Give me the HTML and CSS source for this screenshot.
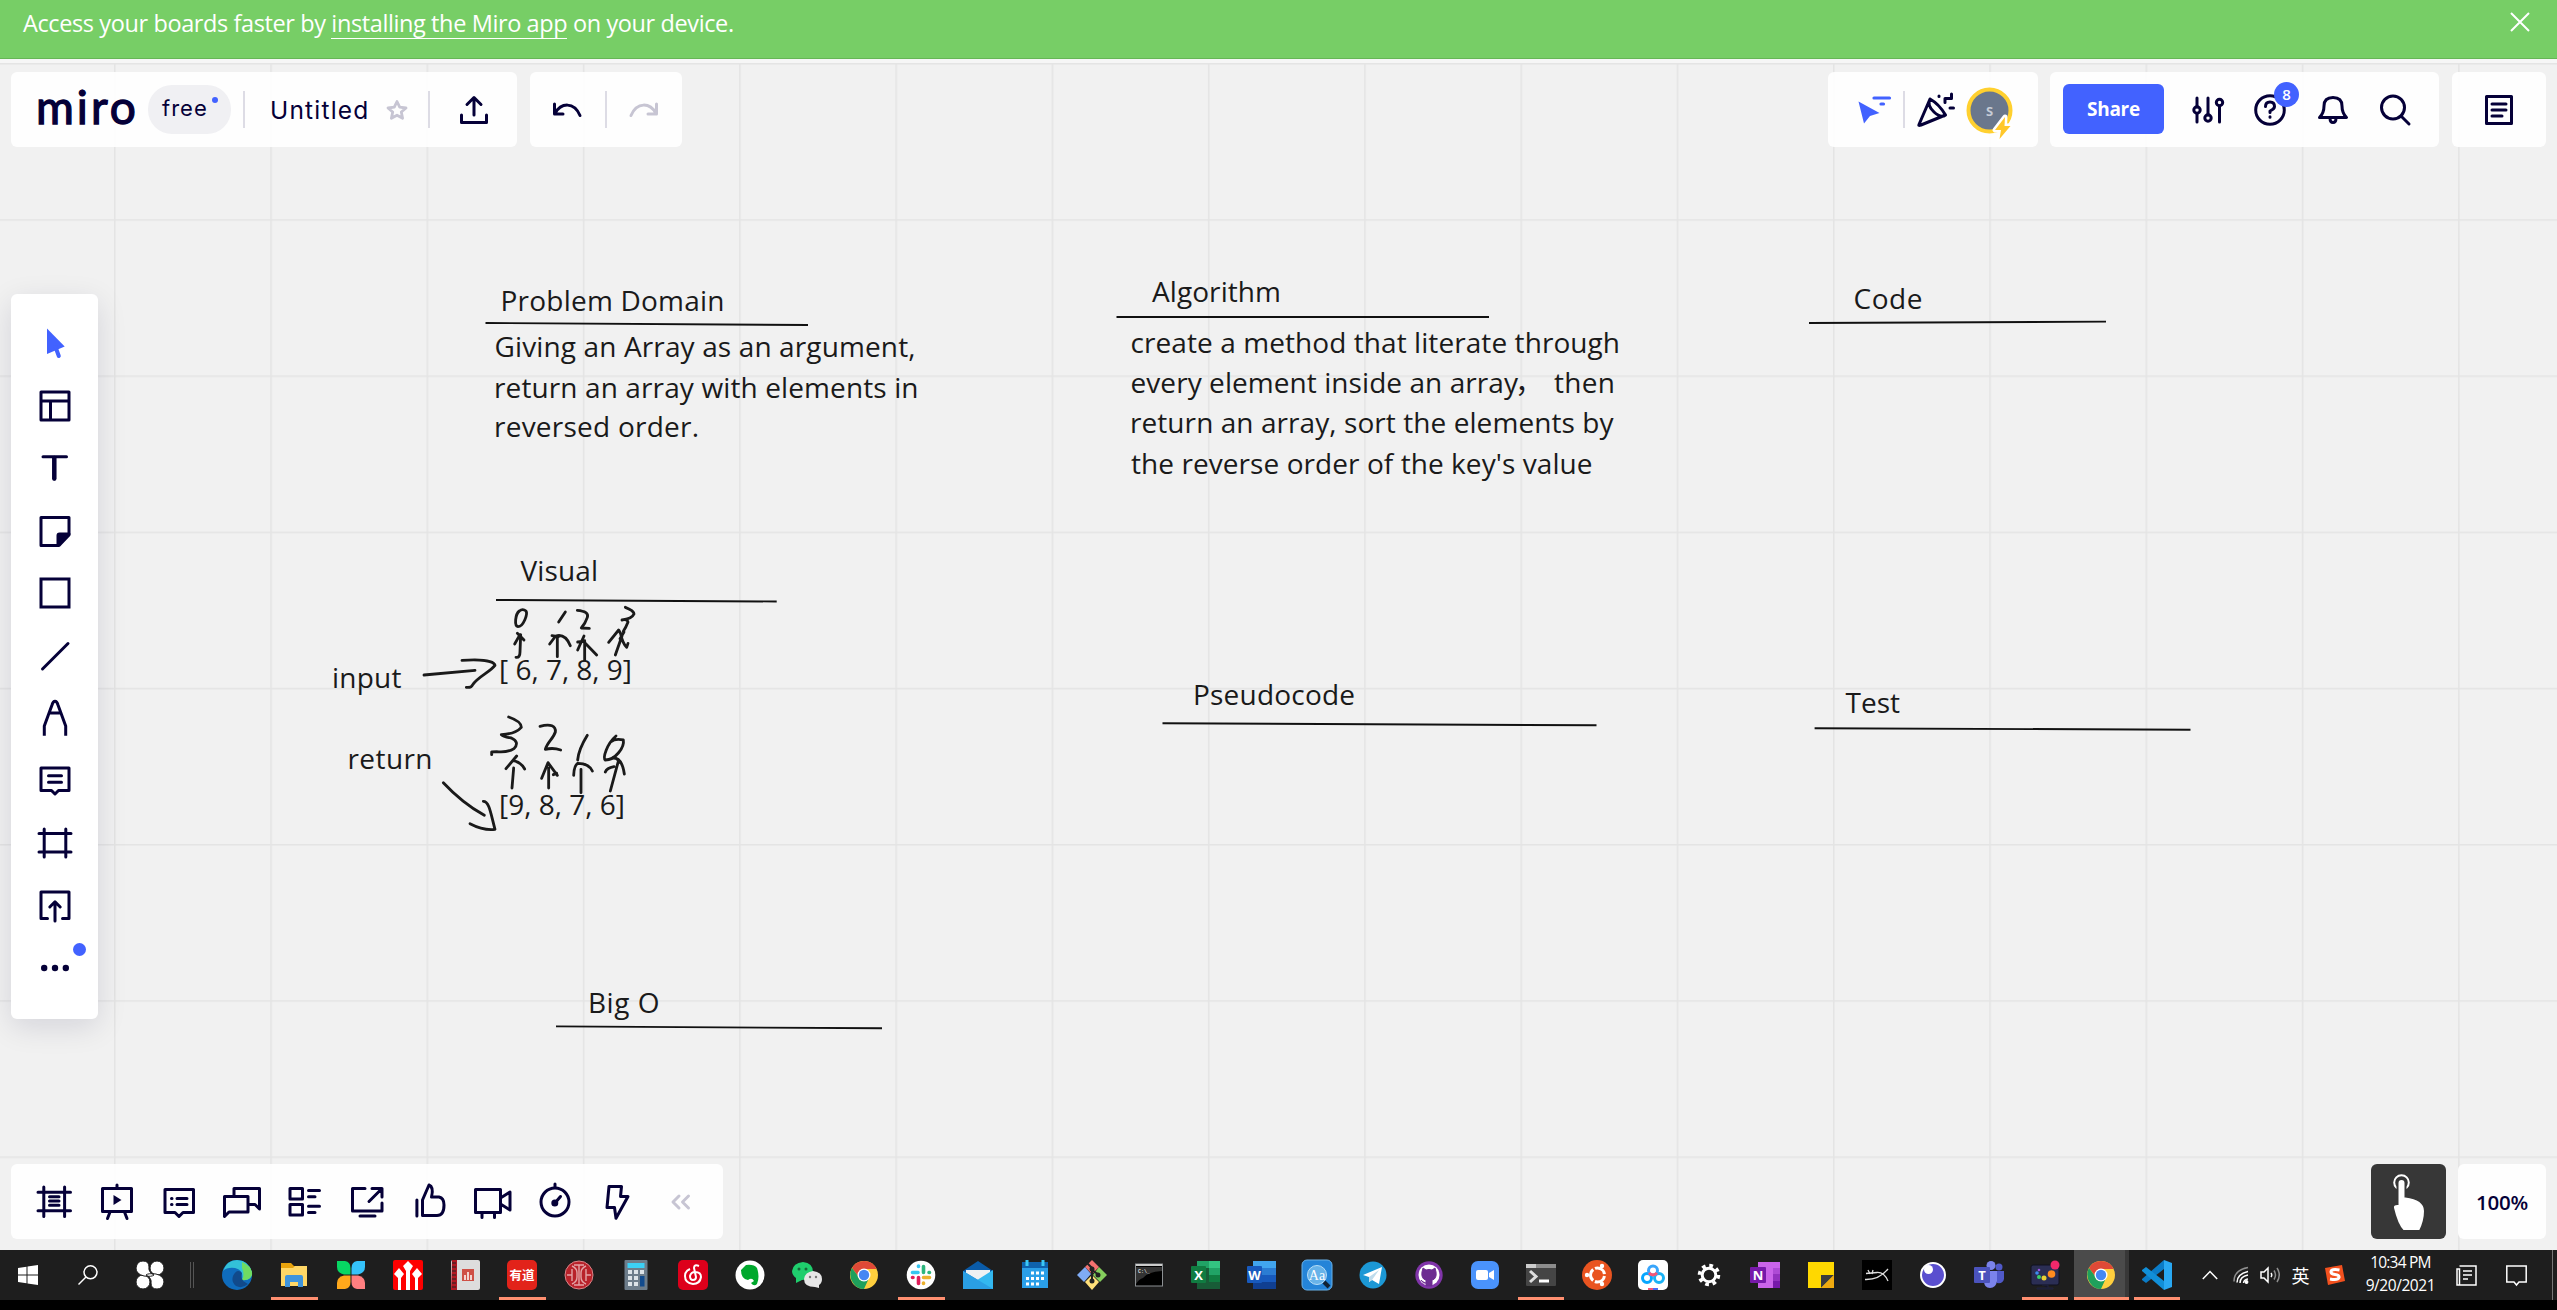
FILE: index.html
```html
<!DOCTYPE html>
<html lang="en">
<head>
<meta charset="utf-8">
<title>Untitled</title>
<link rel="stylesheet" href="styles.css">
</head>
<body>
<div class="banner">
  <p class="banner-text">Access your boards faster by <a class="banner-link">installing the Miro app</a> on your device.</p>
  <svg class="close" width="20" height="20" viewBox="0 0 20 20"><path d="M1 1L19 19M19 1L1 19"/></svg>
</div>

<main class="stage">
  <svg class="board" viewBox="0 59 2557 1191">
    <defs>
      <pattern id="grid" x="114" y="63" width="156.27" height="156.2" patternUnits="userSpaceOnUse">
        <path d="M.8 0V157M0 .8H157" stroke="#e4e4e4" stroke-width="1.6" fill="none"/>
      </pattern>
    </defs>
    <rect x="0" y="59" width="2557" height="1191" fill="url(#grid)"/>
    <rect x="0" y="59" width="2557" height="4" fill="#f6f6f6"/>
    <g class="rules">
      <path d="M485.5 323L808 325M1116.5 317H1489M1809 323L2106 321.6M496 600L776.700 601.500M1162.500 723.300L1596.500 725.300M1814.600 728.200L2190.500 729.700M556 1026.400L882 1028.300"/>
    </g>
    <g class="notes">
      <text x="500.500" y="310.500" textLength="224">Problem Domain</text>
      <text x="494.500" y="357.300" textLength="421">Giving an Array as an argument,</text>
      <text x="494" y="397.500" textLength="424.500">return an array with elements in</text>
      <text x="494" y="437.300" textLength="205">reversed order.</text>
      <text x="1152" y="301.500" textLength="129">Algorithm</text>
      <text x="1130.500" y="352.500" textLength="489.500">create a method that literate through</text>
      <text x="1130.500" y="392.500" textLength="387.500">every element inside an array</text>
      <text x="1515" y="392.500">，</text>
      <text x="1554" y="392.500" textLength="61">then</text>
      <text x="1130" y="433.300" textLength="483.500">return an array, sort the elements by</text>
      <text x="1131" y="473.500" textLength="461.500">the reverse order of the key's value</text>
      <text x="1853.500" y="308.700" textLength="69">Code</text>
      <text x="520.500" y="580.700" textLength="77.500">Visual</text>
      <text x="332" y="688" textLength="69.500">input</text>
      <text x="499" y="680.200" textLength="133">[ 6, 7, 8, 9]</text>
      <text x="347.500" y="769.300" textLength="85">return</text>
      <text x="499" y="815.200" textLength="126">[9, 8, 7, 6]</text>
      <text x="1193" y="704.500" textLength="162">Pseudocode</text>
      <text x="1845.500" y="712.700" textLength="54.500">Test</text>
      <text x="588" y="1013" textLength="71.500">Big O</text>
    </g>
    <g class="ink" transform="translate(310 540) scale(.33333)">
      <path d="M628 213C616 222 612 258 624 260C640 260 654 222 648 213C642 208 634 208 628 213"/>
      <path d="M618 352Q630 354 630 336L632 284M614 312L630 284M622 280L642 300"/>
      <path d="M766 216L746 246M742 350V288M719 312L737 288Q766 280 781 317M726 287L745 290"/>
      <path d="M802 211Q838 214 832 232Q826 250 814 264L838 265"/>
      <path d="M824 360V302M803 330L822 288M803 306L820 304L860 345"/>
      <path d="M946 202Q972 212 972 222Q966 236 936 240Q952 236 954 246Q948 262 940 274M896 307L926 270L936 288L916 345M932 282Q938 310 950 322L954 310M942 276L930 296"/>
      <path d="M342 405L495 391M456 361C510 357 552 362 555 376C540 396 504 410 488 434Q484 444 469 442"/>
      <path d="M596 531Q634 544 634 562Q616 582 574 584Q578 590 604 594Q630 606 612 626Q594 638 560 635L545 636V644"/>
      <path d="M690 559C722 550 738 558 736 576C730 596 712 606 706 628Q730 622 752 630"/>
      <path d="M832 586Q806 628 803 660M918 588C890 612 878 654 886 660C916 660 944 622 940 600Q916 594 902 606"/>
      <path d="M606 744L611 684M588 686L620 648M611 662Q634 668 644 687M716 744V684M695 715L714 668L742 706M730 704L740 700"/>
      <path d="M813 758V688M791 706Q792 676 804 670Q836 670 847 693M901 753L926 660M886 696Q890 684 912 680M908 654Q936 652 943 702M920 656L932 668"/>
      <path d="M400 728Q456 788 523 826M520 784C538 784 542 820 555 868Q520 872 480 851"/>
    </g>
  </svg>

  <div class="ui">
    <header class="top">
      <div class="panel file">
        <span class="logo">miro</span>
        <span class="plan">free</span>
        <i class="sep sep-plan"></i>
        <span class="title">Untitled</span>
        <svg class="star" width="24" height="22" viewBox="0 0 24 22"><path d="M12 2.500L14.700 8.200 21 9 16.300 13 17.600 19.300 12 16.200 6.400 19.300 7.700 13 3 9 9.300 8.200Z"/></svg>
        <i class="sep sep-star"></i>
        <svg class="icon export" width="30" height="30" viewBox="0 0 30 30"><path d="M15 20V3M8 9.500L15 2.500 22 9.500M2.500 20V27.500H27.500V20"/></svg>
      </div>
      <div class="panel history">
        <svg class="icon" width="30" height="14" viewBox="0 0 30 14"><path d="M2.500 1V11H11M3 10.500C9-.5 22-1.500 28 12.500"/></svg>
        <i class="sep"></i>
        <svg class="icon faded" width="30" height="14" viewBox="0 0 30 14"><path d="M27.500 1V11H19M27 10.500C21-.5 8-1.500 2 12.500"/></svg>
      </div>
      <div class="panel people">
        <svg width="34" height="30" viewBox="0 0 34 30"><path fill="#4262ff" d="M.5 6.500L21.500 18 12 21 6 28.500Z"/><path stroke="#4262ff" stroke-width="3.200" stroke-linecap="round" d="M16 3H31.500M23 9H25.500"/></svg>
        <i class="sep"></i>
        <svg class="icon" width="38" height="34" viewBox="0 0 38 34"><path d="M2 31.500L13 6Q22 11 28.500 22L4 32Q1 33 2 31.500ZM13 6Q9.500 12 17 19Q24 25.500 28.500 22M28 9.500V5.500H34.500V1M22 3V3.500M33 15H36.500M31 10"/></svg>
        <svg class="avatar" width="48" height="54" viewBox="0 0 48 54"><circle cx="23.500" cy="24.500" r="21" fill="#6a778c" stroke="#ffd02f" stroke-width="4"/><text x="23.500" y="30" text-anchor="middle">S</text><path d="M39 31L29 44H35L33.500 53 44.500 40H38.500Z" stroke="#fff" stroke-width="5" stroke-linejoin="round" fill="#fff"/><path d="M39 31L29 44H35L33.500 53 44.500 40H38.500Z" fill="#ffc72b"/></svg>
      </div>
      <div class="panel actions">
        <button class="share">Share</button>
        <svg class="icon sliders" width="32" height="30" viewBox="0 0 32 30"><path d="M5 3V12M5 19V27M16 3V20M27.500 11V27"/><circle cx="5" cy="15" r="3.200"/><circle cx="16" cy="23" r="3.200"/><circle cx="27.500" cy="7.500" r="3.200"/></svg>
        <span class="help">
          <svg class="icon" width="34" height="34" viewBox="0 0 34 34"><circle cx="17" cy="17" r="14.300"/><path d="M12.500 13.500Q12.500 9 17 9T21.500 13.500Q21.500 16 17 18V19.500M17 23.800V24.300"/></svg>
          <b class="badge">8</b>
        </span>
        <svg class="icon bell" width="34" height="32" viewBox="0 0 34 32"><path d="M3.500 23.500Q8 19 8 12Q8 3.500 17 3.500T26 12Q26 19 30.500 23.500ZM14 24Q14 28.500 17 28.500T20 24"/></svg>
        <svg class="icon search" width="32" height="32" viewBox="0 0 32 32"><circle cx="14" cy="13.500" r="11.500"/><path d="M22 22L30 30"/></svg>
      </div>
      <div class="panel notes-toggle">
        <svg class="icon" width="30" height="32" viewBox="0 0 30 32"><path d="M2.500 2.500H27.500V29.500H2.500ZM8 10H22M8 16H22M8 22H18"/></svg>
      </div>
    </header>

    <nav class="tools">
      <svg width="34" height="34" viewBox="0 0 34 34"><path fill="#4262ff" d="M9 2.500L26.700 20.500 9 28Z"/><path d="M17.500 21L20.800 30" stroke="#4262ff" stroke-width="4" stroke-linecap="round"/></svg>
      <svg class="icon" width="34" height="34" viewBox="0 0 34 34"><path d="M3 3H31V31H3ZM3 12H31M12.500 12V31"/></svg>
      <svg class="icon" width="34" height="34" viewBox="0 0 34 34"><path d="M5 5.700H28.500M16.300 6V28"/><path stroke-width="4.500" d="M16.300 7V27.500"/></svg>
      <svg class="icon" width="34" height="34" viewBox="0 0 34 34"><path d="M3 3.500H31V21L21 31.500H3Z"/><path fill="#050038" d="M20 31V21.500Q20 20 21.500 20H31Z"/></svg>
      <svg class="icon" width="34" height="34" viewBox="0 0 34 34"><path class="square" d="M3 3H31V31H3Z"/></svg>
      <svg class="icon" width="34" height="34" viewBox="0 0 34 34"><path d="M4.500 30L30 4.500"/></svg>
      <svg class="icon" width="34" height="34" viewBox="0 0 34 34"><path stroke-linecap="butt" d="M6.300 34.700V25L14 4Q15 .3 17 .3T20 4L27.700 25V34.700M11.500 12H22.500"/></svg>
      <svg class="icon" width="34" height="34" viewBox="0 0 34 34"><path d="M3 4H31V26.500H20.500L17 30 13.500 26.500H3ZM10.500 11.700H23.500M10.500 18.200H23.500"/></svg>
      <svg class="icon" width="34" height="34" viewBox="0 0 34 34"><path d="M6.200 3V31M27.800 3V31M1 7.500H33M1 26H33"/></svg>
      <svg class="icon" width="34" height="34" viewBox="0 0 34 34"><path d="M9.500 29.500H3V3H31V29.500H24.500M17 32V13M11.800 18L17 12.800 22.200 18"/></svg>
      <span class="more">
        <svg width="34" height="34" viewBox="0 0 34 34" fill="#050038"><circle cx="6.200" cy="17" r="3.200"/><circle cx="17" cy="17" r="3.200"/><circle cx="27.800" cy="17" r="3.200"/></svg>
        <i class="dot"></i>
      </span>
    </nav>

    <footer class="bottom">
      <div class="panel dock">
        <svg class="icon" width="36" height="36" viewBox="0 0 36 36"><path d="M7.800 3V32.500M28.600 3V32.500M2 8.200H34.500M2 26.800H34.500M13.500 12.800H23M13.500 17H23M13.500 21.200H23"/></svg>
        <svg class="icon" width="36" height="36" viewBox="0 0 36 36"><path d="M3.500 4.500H32.500V27.500H3.500ZM18 4V1M11 28L8.500 34.500M25.500 28L28 34.500"/><path fill="#050038" stroke="none" d="M14.500 11L22.500 16 14.500 21Z"/></svg>
        <svg class="icon" width="36" height="36" viewBox="0 0 36 36"><path d="M4 5.500H32.500V28.500H22L18 32.500 14 28.500H4ZM10.500 14.500H11M16 14.500H26M10.500 20.500H11M16 20.500H26"/></svg>
        <svg class="icon" width="36" height="36" viewBox="0 0 36 36"><path d="M10 12V4.500H35.500V25L31 20.500H25M.5 12.500H24V28H5L.5 32.500Z"/></svg>
        <svg class="icon" width="36" height="36" viewBox="0 0 36 36"><path d="M4 4.500H16.500V15H4ZM4 20.500H16.500V31H4ZM22.500 6.500H33.500M22.500 12.800H29M22.500 22.200H33.500M22.500 28.500H29"/></svg>
        <svg class="icon" width="36" height="36" viewBox="0 0 36 36"><path d="M16 4.500H3.500V27H33V19M11 32H26M20 17.500L32.500 5M23 4.500H33V13"/></svg>
        <svg class="icon" width="36" height="36" viewBox="0 0 36 36"><path d="M4.900 16V32M10.500 16L17 1Q22 3 19.500 13H27Q32 14 32 21Q32 31.500 25 31.500H10.500Z"/></svg>
        <svg class="icon" width="36" height="36" viewBox="0 0 36 36"><path d="M1.500 5.500H26.500V28.500H1.500ZM26.500 14L36 8V26L26.500 20M8 29V33.500M20.500 29V33.500"/></svg>
        <svg class="icon" width="36" height="36" viewBox="0 0 36 36"><circle cx="18" cy="18" r="14"/><path d="M18 3V0M18 19L23.500 12.500"/><circle cx="17.800" cy="19" r="2" fill="#050038"/></svg>
        <svg class="icon" width="36" height="36" viewBox="0 0 36 36"><path d="M10 2.500H22.500L21.500 12.500H29L17 34.200 15.500 23.500H8Z"/></svg>
        <svg class="icon faded collapse" width="20" height="16" viewBox="0 0 20 16"><path d="M8 2L2 8 8 14M17.500 2L11.500 8 17.500 14"/></svg>
      </div>
      <div class="corner">
        <div class="touch">
          <svg width="40" height="60" viewBox="0 0 40 60"><circle cx="13.500" cy="11.500" r="7.300" fill="none" stroke="#fff" stroke-width="2"/><path fill="#fff" stroke="#373737" stroke-width="2" d="M9.500 12Q9.500 8 13.500 8T17.500 12V25.500Q37 28 37 40Q37 50 32 60H15Q9 54 5 37Q4.500 33 9.500 33Z"/></svg>
        </div>
        <div class="panel zoom">100%</div>
      </div>
    </footer>
  </div>
</main>

<div class="taskbar">
  <div class="sys">
    <svg width="20" height="20" viewBox="0 0 20 20" fill="#fff"><path d="M0 3L8.500 1.700V9.500H0ZM9.500 1.500L20 0V9.500H9.500ZM0 10.500H8.500V18.300L0 17ZM9.500 10.500H20V20L9.500 18.500Z"/></svg>
    <svg width="20" height="20" viewBox="0 0 20 20" fill="none" stroke="#fff" stroke-width="1.500"><circle cx="12.500" cy="7.300" r="6.500"/><path d="M8 12L.5 19.500"/></svg>
    <svg width="30" height="30" viewBox="0 0 30 30" fill="#fff" stroke="#1e1e1e"><circle cx="8" cy="22" r="7"/><circle cx="22" cy="8" r="7"/><path d="M8 1Q14 1 14 7Q13 12 19 15Q17 17 9 16Q1 14 1 8Q2 1 8 1ZM22 29Q16 29 16 23Q17 18 11 15Q13 13 21 14Q29 16 29 22Q28 29 22 29Z"/></svg>
    <i class="grip"></i>
  </div>
  <div class="apps">
    <span class="app"><svg viewBox="0 0 30 30"><circle cx="15" cy="15" r="15" fill="#0f6cbd"/><path d="M1 11Q5 0 15 0Q28 1 30 13Q30 21 20 20Q22 10 13 8Q5 7 1 11Z" fill="#33c1d8"/><path d="M20 2Q31 7 30 15Q28 21 20 20Q23 15 20 8Z" fill="#6fdc62"/><path d="M11 16Q15 8 20 13Q17 20 26 24Q20 29 14 26Q9 22 11 16" fill="#114a8b"/></svg></span>
    <span class="app open"><svg viewBox="0 0 30 30"><path d="M2 3H12L15 6H28V26H2Z" fill="#e8a30c"/><path d="M2 8H14L16 6H28V26H2Z" fill="#ffd766"/><path d="M6 27V17Q6 15 8 15H22Q24 15 24 17V27H19V22H11V27Z" fill="#3f94dc"/></svg></span>
    <span class="app"><svg viewBox="0 0 30 30"><path d="M1 1H9Q14.500 2 14.500 8V14.500H8Q1 13 1 7Z" fill="#07d763"/><path d="M29 1H21Q15.500 2 15.500 8V14.500H22Q29 13 29 7Z" fill="#35c3fb"/><path d="M1 29H9Q14.500 28 14.500 22V15.500H8Q1 17 1 23Z" fill="#ffa81b"/><path d="M29 29H21Q15.500 28 15.500 22V15.500H22Q29 17 29 23Z" fill="#ff7f80"/></svg></span>
    <span class="app"><svg viewBox="0 0 30 30"><rect width="30" height="30" rx="2" fill="#f00"/><path d="M15 1L20 6 17 11V30H13V11L10 6ZM6 8L11 14 8 18V30H5V18L1 14ZM24 8L29 14 25 18V30H22V18L19 14Z" fill="#fff"/></svg></span>
    <span class="app"><svg viewBox="0 0 30 30"><rect x="1" y="0" width="29" height="30" rx="2" fill="#ddd"/><path d="M2 0H7V30H1Z" fill="#b01822"/><path d="M2 3H6M2 7H6M2 11H6M2 15H6M2 19H6M2 23H6M2 27H6" stroke="#222"/><rect x="12" y="9" width="12" height="12" fill="#cf5046"/><path d="M15 20V15M18 20V12M21 20V15" stroke="#fff" stroke-width="1.500"/></svg></span>
    <span class="app open"><svg viewBox="0 0 30 30"><rect width="30" height="30" rx="5" fill="#e2231a"/><text x="15" y="20" text-anchor="middle" class="glyph cjk">有道</text></svg></span>
    <span class="app"><svg viewBox="0 0 30 30"><circle cx="15" cy="15" r="14" fill="#b8222a" stroke="#d9868a"/><path d="M8 6Q13 8 13 13V17Q13 22 8 24M22 6Q17 8 17 13V17Q17 22 22 24M10 5H20M10 25H20M15 5V25M3 15H8M22 15H27M8 9V21M22 9V21" stroke="#e3a3a6" stroke-width="1.400" fill="none"/></svg></span>
    <span class="app"><svg viewBox="0 0 30 30"><rect x="3.500" width="23" height="30" rx="1" fill="#6d7d8b"/><rect x="6.500" y="3" width="17" height="5" fill="#3cd0f5"/><path d="M7 10H11V14H7ZM13 10H17V14H13ZM19 10H23V14H19ZM7 16H11V20H7ZM13 16H17V20H13ZM7 22H11V26H7ZM13 22H17V26H13Z" fill="#dce3e8"/><rect x="19" y="16" width="4.500" height="10.500" fill="#114b8e"/></svg></span>
    <span class="app"><svg viewBox="0 0 30 30"><rect width="30" height="30" rx="5" fill="#dd001b"/><path d="M21 6Q16 4 16 8L18 17Q18 20 15 20Q12 20 12 16Q13 12 17 12Q23 12 23 17Q22 24 15 24Q7 23 7 16Q7 11 12 9" fill="none" stroke="#fff" stroke-width="2"/></svg></span>
    <span class="app"><svg viewBox="0 0 30 30"><circle cx="15" cy="15" r="14.500" fill="#fff"/><path d="M6 10L11 5Q19 4 22 8Q25 17 22 24Q19 27 16 23L19 21Q17 17 13 20Q6 19 6 10Z" fill="#00a82d"/></svg></span>
    <span class="app"><svg viewBox="0 0 30 30"><path d="M11 2Q21 3 21 12Q20 20 10 20L4 23V18Q0 15 0 11Q1 3 11 2" fill="#1fce6d"/><circle cx="7" cy="9" r="1.500" fill="#17683a"/><circle cx="14" cy="9" r="1.500" fill="#17683a"/><path d="M21 11Q30 12 30 19Q30 23 27 25V28L23 27Q12 27 12 19Q13 12 21 11" fill="#e6e6e6"/><circle cx="18" cy="17" r="1.200" fill="#777"/><circle cx="24" cy="17" r="1.200" fill="#777"/></svg></span>
    <span class="app"><svg viewBox="0 0 30 30"><use href="#chrome"/></svg></span>
    <span class="app open"><svg viewBox="0 0 30 30"><circle cx="15" cy="15" r="14.300" fill="#fff"/><g stroke-width="3.600" stroke-linecap="round"><path d="M6.500 12.500H12M12.500 6V6.500" stroke="#36c5f0"/><path d="M17.500 6.500V12.500M23 12.500H23.500" stroke="#2eb67d"/><path d="M17.500 17.500H23.500M17.500 23V23.500" stroke="#ecb22e"/><path d="M12.500 17.500V23.500M6.500 17.500H7" stroke="#e01e5a"/></g></svg></span>
    <span class="app"><svg viewBox="0 0 30 30"><path d="M0 11L15 1 30 11V20H0Z" fill="#0a5ba8"/><path d="M3 10H27V20H3Z" fill="#eef1f3"/><path d="M0 11L15 20 0 29Z" fill="#1a8ad8"/><path d="M30 10L0 29H30Z" fill="#33b8f0"/><path d="M0 11L30 29H0Z" fill="#2a9fe4"/></svg></span>
    <span class="app"><svg viewBox="0 0 30 30"><path d="M2 2H28V9H2Z" fill="#0f62ad"/><path d="M2 8H28V28H2Z" fill="#2a9fe8"/><path d="M7 0V6M23 0V6" stroke="#3bc8f5" stroke-width="3"/><path d="M11 13H25M6 18.500H25M6 24H20" stroke="#fff" stroke-width="3" stroke-dasharray="3 2"/></svg></span>
    <span class="app"><svg viewBox="0 0 30 30"><path d="M15 0L22 7 15 14 8 7Z" fill="#f4716f"/><path d="M8 7L14 14 7 22 0 15Z" fill="#7fabf5"/><path d="M22 7L30 15 23 22 16 15Z" fill="#85cf5d"/><path d="M15 15L22 22 15 30 8 22Z" fill="#ffe07a"/><path d="M10 3L15 8V22M15 10L22 15" stroke="#222" stroke-width="2" fill="none"/><g fill="#222"><circle cx="15" cy="9" r="2.500"/><circle cx="15" cy="21" r="2.500"/><circle cx="21" cy="15" r="2.500"/></g></svg></span>
    <span class="app near"><svg viewBox="0 0 30 30"><rect x="1.500" y="4" width="27" height="22" fill="#000" stroke="#8c9093"/><path d="M2 5H28" stroke="#ccc" stroke-width="2"/><path d="M2 7H28V11Q13 12 9 18Q5 19 2 24Z" fill="#333"/><text x="4" y="13" class="tiny">C:\_</text></svg></span>
    <span class="app near"><svg viewBox="0 0 30 30"><path d="M7 1H30V29H7Z" fill="#185c37"/><path d="M7 1H19V8H7Z" fill="#21a366"/><path d="M19 1H30V8H19Z" fill="#33c481"/><path d="M19 8H30V15H19Z" fill="#21a366"/><path d="M19 15H30V22H19Z" fill="#107c41"/><rect x="1" y="6" width="15" height="17" rx="1" fill="#107c41"/><text x="8.500" y="19.500" text-anchor="middle" class="glyph">X</text></svg></span>
    <span class="app near"><svg viewBox="0 0 30 30"><path d="M7 1H30V8H7Z" fill="#41a5ee"/><path d="M7 8H30V15H7Z" fill="#2b7cd3"/><path d="M7 15H30V22H7Z" fill="#185abd"/><path d="M7 22H30V29H7Z" fill="#103f91"/><rect x="1" y="6" width="15" height="17" rx="1" fill="#185abd"/><text x="8.500" y="19.500" text-anchor="middle" class="glyph">W</text></svg></span>
    <span class="app near"><svg viewBox="0 0 30 30"><rect width="30" height="30" rx="5" fill="#2484d8" stroke="#69b1e8"/><circle cx="15" cy="15" r="9.500" fill="#68b3e9" stroke="#b6ddf6"/><path d="M22 22L27 27" stroke="#123" stroke-width="4"/><text x="15" y="20" text-anchor="middle" class="glyph serif">Aa</text></svg></span>
    <span class="app near"><svg viewBox="0 0 30 30"><circle cx="15" cy="15" r="13.500" fill="#1c98d5"/><path d="M5 15L24 7 21 24 14 20 11 22V17Z" fill="#fff"/><path d="M11 17L21 10 14 20 11 22" fill="#bfdcec"/></svg></span>
    <span class="app near"><svg viewBox="0 0 30 30"><circle cx="15" cy="15" r="13.700" fill="#8034a9"/><circle cx="15" cy="15" r="10.500" fill="#fff"/><path d="M9 8L12 10Q15 9 18 10L21 8 22 12Q23 19 18 20V26H12V20Q7 19 8 12ZM12 23Q9 24 7 20" fill="#6d2d91" stroke="#6d2d91"/></svg></span>
    <span class="app near"><svg viewBox="0 0 30 30"><rect x="1" y="1" width="28" height="28" rx="7" fill="#4a93fb"/><rect x="6" y="10" width="12" height="10" rx="2" fill="#fff"/><path d="M19 13L24 10V20L19 17Z" fill="#fff"/></svg></span>
    <span class="app near open"><svg viewBox="0 0 30 30"><rect y="4" width="30" height="22" rx="1" fill="#454545"/><path d="M0 4H30V8H0Z" fill="#8d8d8d"/><path d="M0 4H10V8H0Z" fill="#ccc"/><path d="M4 11L10 16.500 4 22" stroke="#ddd" stroke-width="3" fill="none"/><path d="M13 21H23" stroke="#fff" stroke-width="3"/></svg></span>
    <span class="app near"><svg viewBox="0 0 30 30"><circle cx="15" cy="15" r="15" fill="#e95420"/><circle cx="15.500" cy="15" r="7" fill="none" stroke="#fff" stroke-width="3" stroke-dasharray="12.600 2" stroke-dashoffset="-1"/><g fill="#fff"><circle cx="5" cy="15" r="2.200"/><circle cx="20" cy="6" r="2.200"/><circle cx="20" cy="24" r="2.200"/></g></svg></span>
    <span class="app near"><svg viewBox="0 0 30 30"><rect width="30" height="30" rx="5" fill="#fff"/><g fill="none" stroke-width="3"><circle cx="9" cy="18" r="4.500" stroke="#06a7ff"/><circle cx="21" cy="18" r="4.500" stroke="#19b2f5"/><circle cx="15" cy="10.500" r="4.500" stroke="#39a5fb"/><path d="M11 13Q15 17 19 13" stroke="#f55576"/></g><path d="M10 29H15" stroke="#f55576" stroke-width="2"/><path d="M15 29H20" stroke="#4a6df5" stroke-width="2"/></svg></span>
    <span class="app near"><svg viewBox="0 0 30 30"><circle cx="15" cy="15" r="9.500" stroke="#fff" stroke-width="3.500" stroke-dasharray="3.700 3.760" fill="none"/><circle cx="15" cy="15" r="6.800" stroke="#fff" stroke-width="3" fill="none"/></svg></span>
    <span class="app near"><svg viewBox="0 0 30 30"><path d="M8 2H30V28H8Z" fill="#ca64ea"/><path d="M23 8H30V14H23Z" fill="#ae4bd5"/><path d="M23 14H30V21H23Z" fill="#9332bf"/><path d="M23 21H30V28H23Z" fill="#7719aa"/><rect x="0" y="7" width="16" height="16" rx="1" fill="#7719aa"/><text x="8" y="20" text-anchor="middle" class="glyph">N</text></svg></span>
    <span class="app near"><svg viewBox="0 0 30 30"><path d="M2 2H28V28H2Z" fill="#ffd800"/><path d="M15 28V15H28Z" fill="#3c3c3c"/><path d="M15 28L28 15V28Z" fill="#efaa10"/></svg></span>
    <span class="app near"><svg viewBox="0 0 30 30"><rect width="30" height="30" fill="#000"/><path d="M6 10L8 14M11 10L10 14" stroke="#ddd" stroke-width="1.300"/><path d="M4 13.500L15 12.500Q22 12 26 21M3 19.500Q17 20 26 9" stroke="#ddd" stroke-width="1.300" fill="none"/></svg></span>
    <span class="app near"><svg viewBox="0 0 30 30"><circle cx="15" cy="15" r="12" fill="#5a4fcf" stroke="#fff" stroke-width="2"/><circle cx="10.500" cy="9.500" r="4.500" fill="#fff"/></svg></span>
    <span class="app near"><svg viewBox="0 0 30 30"><circle cx="25" cy="7" r="3.500" fill="#5059c9"/><circle cx="17" cy="5.500" r="4.500" fill="#7b83eb"/><path d="M20 11H30V19Q29 24 23 23Z" fill="#5059c9"/><path d="M10 11H23V21Q22 28 16 28T10 21Z" fill="#7b83eb"/><rect x="0" y="7" width="16" height="16" rx="1" fill="#4b53bc"/><text x="8" y="20" text-anchor="middle" class="glyph">T</text></svg></span>
    <span class="app near open"><svg viewBox="0 0 30 30"><rect x="1" y="5" width="28" height="20" rx="2" fill="#2b2e54" stroke="#10111f"/><path d="M12 25H18V28H7V29H23V28H18" fill="#14162a" stroke="#20233c"/><circle cx="25" cy="5" r="4.500" fill="#f0286b"/><circle cx="21.500" cy="14" r="3.800" fill="#ff8b1f"/><circle cx="14" cy="18" r="2.500" fill="#e8d034"/><circle cx="9" cy="17" r="2" fill="#3bd069"/><circle cx="7" cy="13" r="1.800" fill="#3e8bf0"/><circle cx="9" cy="10" r="1.300" fill="#9857e0"/></svg></span>
    <span class="app near open active"><svg viewBox="0 0 30 30"><g id="chrome"><circle cx="15" cy="15" r="14" fill="#ffcf3e"/><path d="M3 8Q7 1 15 1Q24 1 27.500 9H15Q9 10 9 16Z" fill="#df4937"/><path d="M3 8Q-1 15 4 23Q8 29 15 29L20 18 15 21Q10 21 9 16Z" fill="#1fa05c"/><circle cx="15" cy="15" r="6.500" fill="#fff"/><circle cx="15" cy="15" r="5.200" fill="#4587f3"/></g></svg></span>
    <span class="app near open"><svg viewBox="0 0 30 30"><path d="M22 0L30 3V27L22 30Z" fill="#29a8f2"/><path d="M22 0V9L4 23 0 20 0 19Z" fill="#0b7cc7"/><path d="M22 30V21L4 7 0 10V11Z" fill="#118fd8"/></svg></span>
  </div>
  <div class="tray">
    <svg class="t-up" width="16" height="10" viewBox="0 0 16 10"><path d="M.8 9L8 1.500 15.200 9"/></svg>
    <svg class="t-wifi" width="17" height="18" viewBox="0 0 17 18"><path d="M7 17Q7 10.500 15 9M4 16.500Q4 8 15 5.500" /><path opacity=".5" d="M1 15.500Q1 4 15 1.500"/><path d="M10.500 17Q11 13.500 15 13"/><circle cx="13.500" cy="16" r="1.200" fill="#fff"/></svg>
    <svg class="t-vol" width="21" height="18" viewBox="0 0 21 18"><path d="M1 6H4L8 2V16L4 12H1ZM11 7Q12.500 9 11 11"/><path opacity=".5" d="M14 4.500Q17 9 14 13.500M17 2Q21.500 9 17 16"/></svg>
    <span class="t-ime">英</span>
    <svg class="t-sogou" width="20" height="20" viewBox="0 0 20 20"><path d="M0 3L17 0 20 16 3 20Z" fill="#f4511e" stroke="none"/><path d="M14.500 5Q6 3.500 6 7Q6 9 10 9.500Q14.500 10 14 12.500Q13 15.500 5 14" stroke="#fff" stroke-width="3"/></svg>
    <div class="clock"><span>10:34 PM</span><span class="date">9/20/2021</span></div>
    <svg class="t-news" width="21" height="21" viewBox="0 0 21 21"><path d="M3.500 1H20V20H1V4H3.500V20M7 6H16M7 10H16M7 14H12"/></svg>
    <svg class="t-note" width="21" height="21" viewBox="0 0 21 21"><path d="M.8 1H20.200V17H13L10.500 20 8 17H.8Z"/></svg>
    <i class="peek"></i>
  </div>
</div>
</body>
</html>
```
FILE: styles.css
```css
* { box-sizing: border-box; }

body {
  margin: 0;
  width: 2557px;
  height: 1310px;
  overflow: hidden;
  background: #000;
  display: flex;
  flex-direction: column;
  font-family: "Open Sans", "Noto Sans CJK SC", sans-serif;
  color: #050038;
}

svg { flex: none; overflow: visible; }

/* Banner */
.banner {
  height: 59px;
  flex: none;
  background: #77ce66;
  border-bottom: 1px solid #66b656;
  display: flex;
  justify-content: space-between;
  align-items: flex-start;
  padding: 8px 27px 0 23px;
}
.banner-text {
  margin: 0;
  color: #fff;
  font: 400 23.500px/30px "Open Sans", sans-serif;
  letter-spacing: -0.390px;
  white-space: nowrap;
}
.banner-link { border-bottom: 1px solid #fff; display: inline-block; height: 31px; }
.close { margin-top: 4px; fill: none; stroke: #fff; stroke-width: 2; }

/* Board */
.stage { position: relative; height: 1191px; flex: none; background: #f1f1f1; overflow: hidden; }
.board { position: absolute; left: 0; top: 0; width: 2557px; height: 1191px; }
.rules { stroke: #111; stroke-width: 1.9; fill: none; }
.notes { fill: #1a1a1a; font: 400 28px "Open Sans", "Noto Sans CJK SC", sans-serif; }
.ink { fill: none; stroke: #1a1a1a; stroke-width: 8.500; stroke-linecap: round; stroke-linejoin: round; }

.ui {
  position: absolute;
  inset: 0;
  display: flex;
  flex-direction: column;
  padding: 13px 11px 11px;
}
.panel {
  height: 75px;
  background: rgba(255, 255, 255, .9);
  border-radius: 6px;
  display: flex;
  align-items: center;
}
.icon { fill: none; stroke: #050038; stroke-width: 3; stroke-linecap: round; stroke-linejoin: round; }
.faded { stroke: #c7c5d3; }
.square { stroke-linejoin: miter; }
.sep { width: 2px; height: 37px; background: #dddce5; flex: none; }

/* Header */
.top { display: flex; flex: none; }
.file { width: 506px; padding-left: 25px; }
.logo {
  width: 99px;
  font: 400 46px/60px Lato, sans-serif;
  -webkit-text-stroke: 1.300px #050038;
  letter-spacing: 3px;
  flex: none;
  margin-top: -5px;
}
.plan {
  position: relative;
  width: 83px;
  height: 49px;
  margin-left: 13px;
  padding-left: 14px;
  border-radius: 24px;
  background: #f0f0f3;
  font: 400 22px/47px Inter, sans-serif;
  letter-spacing: 1px;
}
.plan::after {
  content: "";
  position: absolute;
  right: 13px;
  top: 12px;
  width: 6px;
  height: 6px;
  border-radius: 50%;
  background: #4262ff;
}
.sep-plan { margin-left: 12px; }
.title { width: 98px; margin-left: 25px; font: 400 24.500px/30px Inter, sans-serif; letter-spacing: 1.200px; white-space: nowrap; }
.star { margin-left: 17px; fill: none; stroke: #c7c5d3; stroke-width: 2.800; stroke-linejoin: round; }
.sep-star { margin-left: 19px; }
.export { margin-left: 29px; }

.history { width: 152px; margin-left: 13px; padding: 0 23px 0 22px; justify-content: space-between; }

.people { width: 210px; margin-left: auto; padding-left: 30px; }
.people .sep { margin: 0 13px 0 11px; }
.people .icon { margin-left: -1px; }
.avatar { margin: 6px 0 0 11px; }
.avatar text { font: 700 13px "Open Sans", sans-serif; fill: #c6ccd6; }

.actions { width: 389px; margin-left: 12px; padding-left: 13px; }
.share {
  width: 101px;
  height: 50px;
  margin-top: -1px;
  border: 0;
  border-radius: 6px;
  background: #4262ff;
  color: #fff;
  font: 700 19px/50px "Open Sans", sans-serif;
  letter-spacing: -0.3px;
  padding: 0;
}
.sliders { margin-left: 28px; }
.help { position: relative; height: 34px; margin-left: 29px; }
.badge {
  position: absolute;
  left: 21px;
  top: -11px;
  width: 25px;
  height: 25px;
  border-radius: 50%;
  background: #4262ff;
  color: #fff;
  font: 600 15px/25px "Open Sans", sans-serif;
  text-align: center;
}
.bell { margin-left: 29px; }
.search { margin-left: 29px; }
.notes-toggle { width: 94px; margin-left: 13px; justify-content: center; }

/* Side tools */
.tools {
  width: 87px;
  height: 725px;
  flex: none;
  margin-top: 147px;
  padding: 32px 0 34px;
  background: #fff;
  border-radius: 6px;
  box-shadow: 0 8px 30px rgba(5, 0, 56, .12);
  display: flex;
  flex-direction: column;
  align-items: center;
  justify-content: space-between;
}
.more { position: relative; height: 34px; }
.dot { position: absolute; left: 35px; top: -8px; width: 13px; height: 13px; border-radius: 50%; background: #4262ff; }

/* Bottom row */
.bottom { display: flex; justify-content: space-between; margin-top: auto; }
.dock { width: 712px; padding: 0 32px 0 25px; gap: 26.600px; }
.collapse { margin-left: auto; }
.corner { display: flex; gap: 12px; }
.touch {
  width: 75px;
  height: 75px;
  border-radius: 6px;
  background: #373737;
  display: flex;
  align-items: center;
  padding: 0 0 9px 17px;
}
.touch svg { margin-top: 7px; }
.zoom { width: 88px; justify-content: center; font-size: 20.500px; font-weight: 600; letter-spacing: -0.2px; }

/* Taskbar */
.taskbar { height: 50px; flex: none; background: #1e1e1e; display: flex; }
.sys { width: 208.500px; display: flex; align-items: center; padding-left: 18px; flex: none; }
.sys svg + svg { margin-left: 40px; }
.sys svg:nth-child(3) { margin-left: 37px; }
.grip { width: 4px; height: 26px; margin-left: 25px; border: solid #555; border-width: 0 1px; }
.apps { display: flex; flex: none; }
.app { width: 57px; height: 50px; display: flex; align-items: center; justify-content: center; position: relative; }
.app svg { width: 30px; height: 30px; }
.near { width: 56.050px; }
.open::after { content: ""; position: absolute; left: 5px; right: 5px; bottom: 0; height: 3px; background: #ff8f70; }
.active { background: linear-gradient(90deg, transparent 1px, #4b4b4b 1px, #4b4b4b 52px, #383838 52px, #383838 56px, transparent 56px); }
.active::after { left: 1px; right: 0; }
.glyph { font: 700 13px "Open Sans", sans-serif; fill: #fff; }
.cjk { font: 700 12.500px "Noto Sans CJK SC", sans-serif; }
.serif { font: 400 14px "Liberation Serif", serif; }
.tiny { font: 700 5px "Liberation Mono", monospace; fill: #ddd; }

.tray { flex: 1; display: flex; align-items: center; color: #fff; }
.tray svg { fill: none; stroke: #fff; stroke-width: 1.500; }
.t-up { margin-left: 17px; }
.t-wifi { margin-left: 15px; }
.t-vol { margin-left: 10px; }
.t-ime { margin-left: 10px; width: 19px; font: 400 18px/24px "Noto Sans CJK SC", sans-serif; }
.t-sogou { margin-left: 15px; }
.clock {
  width: 78px;
  margin-left: 16px;
  margin-top: -2px;
  display: flex;
  flex-direction: column;
  align-items: center;
  font-size: 15.500px;
  line-height: 23.500px;
  letter-spacing: -0.8px;
  white-space: nowrap;
}
.date { letter-spacing: -0.450px; }
.t-news { margin-left: 17px; }
.t-note { margin-left: 29px; }
.peek { width: 1px; height: 50px; background: #777; margin-left: auto; margin-right: 4px; }
```
